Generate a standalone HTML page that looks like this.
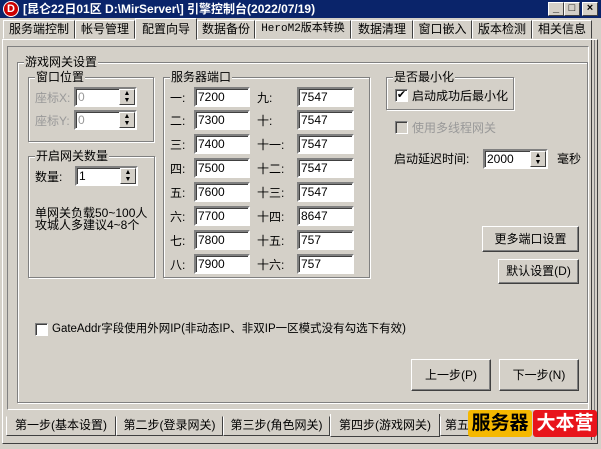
<!DOCTYPE html>
<html><head><meta charset="utf-8"><style>
*{box-sizing:border-box;margin:0;padding:0}
body{width:601px;height:449px;background:#d4d0c8;font:12px "Liberation Sans","Noto Sans CJK SC","WenQuanYi Zen Hei",sans-serif;color:#000;position:relative;overflow:hidden}
.a{position:absolute;white-space:nowrap;line-height:14px}
.title{left:0;top:0;width:601px;height:18px;background:#0a246a;color:#fff;font-weight:bold;font-size:12px;line-height:18px}
.tb{position:absolute;top:2px;width:16px;height:14px;background:#d4d0c8;border:1px solid;border-color:#fff #404040 #404040 #fff;color:#000;font-size:11px;line-height:11px;text-align:center}
.tab{position:absolute;top:20px;height:19px;border:1px solid;border-color:#fff #404040 transparent #fff;line-height:17px;text-align:center;font-size:12px}
.grp{position:absolute;border:1px solid #808080;box-shadow:1px 1px 0 #fff inset,1px 1px 0 #fff}
.gl{position:absolute;top:-8px;left:6px;background:#d4d0c8;padding:0 1px;line-height:14px;font-size:12px}
.in{position:absolute;height:20px;background:#fff;border:2px solid;border-color:#808080 #fff #fff #808080;box-shadow:inset 1px 1px 0 #404040;font-size:12px;line-height:16px;padding-left:2px}
.dis{color:#999}
.sp{position:absolute;right:0;top:0;width:16px;height:16px;background:#d4d0c8;border:1px solid;border-color:#fff #404040 #404040 #fff;font-size:7px;line-height:7px;text-align:center;color:#000}
.btn{position:absolute;background:#d4d0c8;border:1px solid;border-color:#fff #404040 #404040 #fff;box-shadow:inset -1px -1px 0 #808080;text-align:center;font-size:12px}
.cb{position:absolute;width:13px;height:13px;background:#fff;border:1px solid;border-color:#808080 #fff #fff #808080;box-shadow:inset 1px 1px 0 #404040;font-size:11px;line-height:11px;text-align:center}
.btab{position:absolute;top:416px;height:20px;border:1px solid;border-color:transparent #404040 #404040 #fff;line-height:17px;font-size:12px;text-align:center}
</style></head><body>
<div class="a title"><span style="position:absolute;left:3px;top:1px;width:16px;height:16px;border-radius:50%;background:#c00;border:1px solid #fff;color:#fff;font-size:11px;line-height:14px;text-align:center">D</span><span style="position:absolute;left:23px">[昆仑22日01区 D:\MirServer\] 引擎控制台(2022/07/19)</span>
<span class="tb" style="left:548px">_</span><span class="tb" style="left:564px">□</span><span class="tb" style="left:582px">×</span></div>

<div class="tab" style="left:3px;width:72px">服务端控制</div>
<div class="tab" style="left:75px;width:60px">帐号管理</div>
<div class="tab" style="left:135px;width:62px;top:18px;height:22px;background:#d4d0c8;z-index:2;line-height:20px">配置向导</div>
<div class="tab" style="left:197px;width:58px">数据备份</div>
<div class="tab" style="left:255px;width:96px;font-family:'Liberation Mono','Noto Sans CJK SC',monospace;font-size:11px">HeroM2版本转换</div>
<div class="tab" style="left:351px;width:62px">数据清理</div>
<div class="tab" style="left:413px;width:59px">窗口嵌入</div>
<div class="tab" style="left:472px;width:60px">版本检测</div>
<div class="tab" style="left:532px;width:60px">相关信息</div>

<div style="position:absolute;left:2px;top:39px;width:596px;height:405px;border:1px solid;border-color:#fff #404040 #404040 #fff"></div>
<div style="position:absolute;left:7px;top:46px;width:582px;height:364px;border:1px solid;border-color:#808080 #fff #fff #808080"></div>
<div style="position:absolute;left:591px;top:40px;width:4px;height:400px;border-left:1px solid #404040;border-right:1px solid #808080"></div>

<div class="grp" style="left:17px;top:62px;width:571px;height:341px"><span class="gl" style="left:6px">游戏网关设置</span></div>

<div class="grp" style="left:28px;top:77px;width:126px;height:65px"><span class="gl">窗口位置</span></div>
<div class="a" style="left:35px;top:91px;color:#999">座标X:</div>
<div class="in dis" style="left:74px;top:87px;width:63px">0<span class="sp">▲<br>▼</span></div>
<div class="a" style="left:35px;top:114px;color:#999">座标Y:</div>
<div class="in dis" style="left:74px;top:110px;width:63px">0<span class="sp">▲<br>▼</span></div>

<div class="grp" style="left:28px;top:156px;width:127px;height:122px"><span class="gl">开启网关数量</span></div>
<div class="a" style="left:35px;top:170px">数量:</div>
<div class="in" style="left:75px;top:166px;width:63px">1<span class="sp">▲<br>▼</span></div>
<div class="a" style="left:35px;top:207px;line-height:12px">单网关负载50~100人<br>攻城人多建议4~8个</div>

<div class="grp" style="left:163px;top:77px;width:207px;height:201px"><span class="gl">服务器端口</span></div>
<div class="a" style="left:170px;top:91px">一:</div><div class="in" style="left:194px;top:87px;width:56px">7200</div>
<div class="a" style="left:170px;top:114px">二:</div><div class="in" style="left:194px;top:110px;width:56px">7300</div>
<div class="a" style="left:170px;top:138px">三:</div><div class="in" style="left:194px;top:134px;width:56px">7400</div>
<div class="a" style="left:170px;top:162px">四:</div><div class="in" style="left:194px;top:158px;width:56px">7500</div>
<div class="a" style="left:170px;top:186px">五:</div><div class="in" style="left:194px;top:182px;width:56px">7600</div>
<div class="a" style="left:170px;top:210px">六:</div><div class="in" style="left:194px;top:206px;width:56px">7700</div>
<div class="a" style="left:170px;top:234px">七:</div><div class="in" style="left:194px;top:230px;width:56px">7800</div>
<div class="a" style="left:170px;top:258px">八:</div><div class="in" style="left:194px;top:254px;width:56px">7900</div>
<div class="a" style="left:257px;top:91px">九:</div><div class="in" style="left:297px;top:87px;width:57px">7547</div>
<div class="a" style="left:257px;top:114px">十:</div><div class="in" style="left:297px;top:110px;width:57px">7547</div>
<div class="a" style="left:257px;top:138px">十一:</div><div class="in" style="left:297px;top:134px;width:57px">7547</div>
<div class="a" style="left:257px;top:162px">十二:</div><div class="in" style="left:297px;top:158px;width:57px">7547</div>
<div class="a" style="left:257px;top:186px">十三:</div><div class="in" style="left:297px;top:182px;width:57px">7547</div>
<div class="a" style="left:257px;top:210px">十四:</div><div class="in" style="left:297px;top:206px;width:57px">8647</div>
<div class="a" style="left:257px;top:234px">十五:</div><div class="in" style="left:297px;top:230px;width:57px">757</div>
<div class="a" style="left:257px;top:258px">十六:</div><div class="in" style="left:297px;top:254px;width:57px">757</div>

<div class="grp" style="left:386px;top:77px;width:128px;height:33px"><span class="gl" style="left:6px">是否最小化</span></div>
<div class="cb" style="left:395px;top:89px">✔</div><div class="a" style="left:412px;top:89px">启动成功后最小化</div>
<div class="cb" style="left:395px;top:121px;background:#d4d0c8"></div><div class="a" style="left:412px;top:121px;color:#999">使用多线程网关</div>
<div class="a" style="left:394px;top:152px">启动延迟时间:</div>
<div class="in" style="left:483px;top:149px;width:65px">2000<span class="sp">▲<br>▼</span></div>
<div class="a" style="left:557px;top:152px">毫秒</div>

<div class="btn" style="left:482px;top:226px;width:97px;height:26px;line-height:24px">更多端口设置</div>
<div class="btn" style="left:498px;top:259px;width:81px;height:25px;line-height:23px">默认设置(D)</div>

<div class="cb" style="left:35px;top:323px"></div>
<div class="a" style="left:52px;top:322px;font-size:11.5px">GateAddr字段使用外网IP(非动态IP、非双IP一区模式没有勾选下有效)</div>

<div class="btn" style="left:411px;top:359px;width:80px;height:32px;line-height:30px">上一步(P)</div>
<div class="btn" style="left:499px;top:359px;width:80px;height:32px;line-height:30px">下一步(N)</div>

<div class="btab" style="left:6px;width:110px">第一步(基本设置)</div>
<div class="btab" style="left:116px;width:107px">第二步(登录网关)</div>
<div class="btab" style="left:223px;width:107px">第三步(角色网关)</div>
<div class="btab" style="left:330px;width:110px;top:414px;height:23px;background:#d4d0c8;border-top:none;line-height:22px">第四步(游戏网关)</div>
<div class="btab" style="left:440px;width:60px;text-align:left;padding-left:4px">第五</div>
<div class="a" style="left:468px;top:410px;width:64px;height:27px;background:#f5b800;border-radius:3px;font-weight:bold;font-size:19px;line-height:27px;text-align:center">服务器</div>
<div class="a" style="left:533px;top:410px;width:64px;height:27px;background:#e8141b;color:#fff;border-radius:3px;font-weight:bold;font-size:19px;line-height:27px;text-align:center">大本营</div>
</body></html>
